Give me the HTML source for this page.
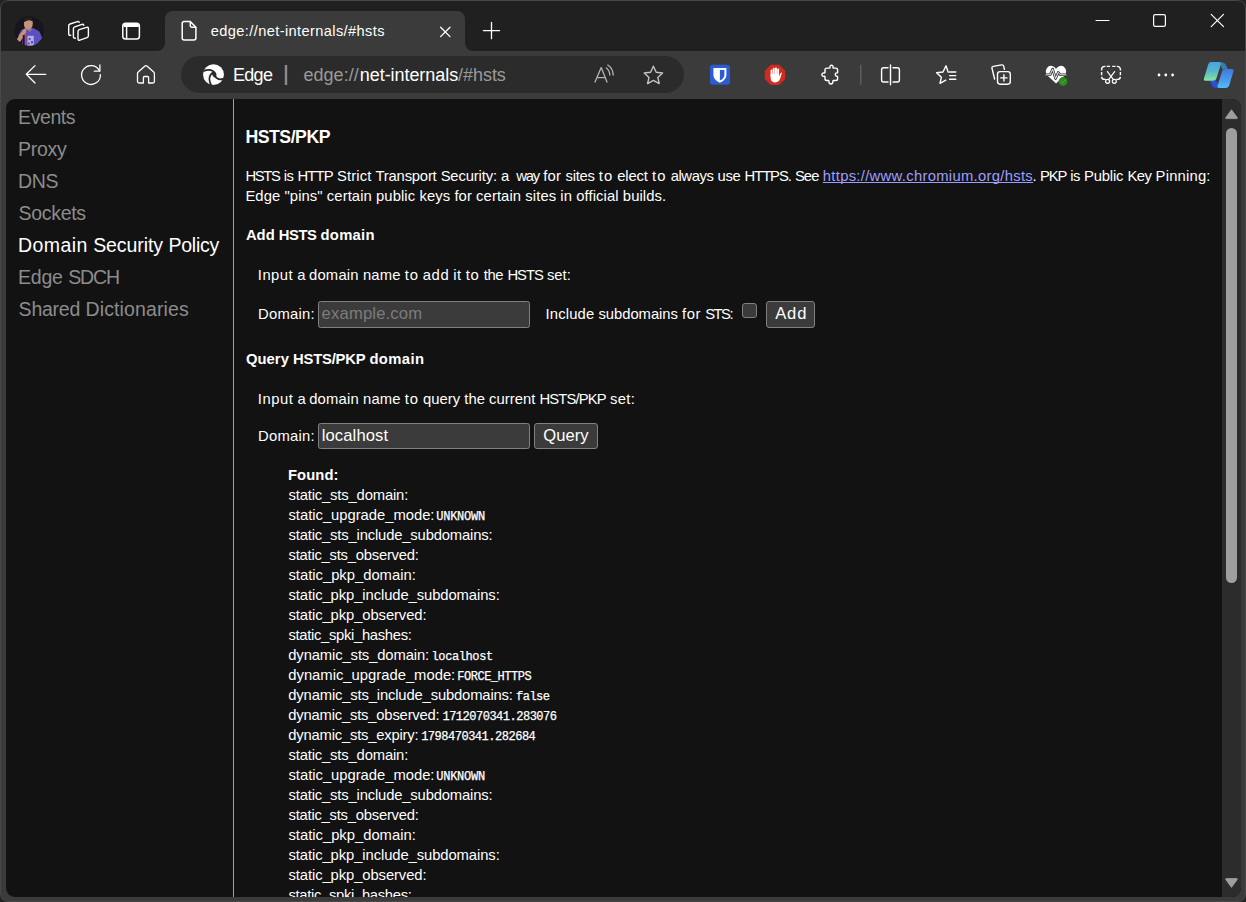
<!DOCTYPE html>
<html lang="en">
<head>
<meta charset="utf-8">
<title>edge://net-internals/#hsts</title>
<style>
*{box-sizing:border-box;margin:0;padding:0}
html,body{width:1246px;height:902px;overflow:hidden;background:#232323}
body{font-family:"Liberation Sans",sans-serif;color:#fff;position:relative}
#win{position:absolute;left:0;top:0;width:1246px;height:902px;background:#3b3b3b;overflow:hidden;border-radius:8px}
#frame{position:absolute;left:0;top:0;width:1246px;height:902px;border:1px solid #474747;border-radius:8px;pointer-events:none}
#titlebar{position:absolute;left:0;top:0;width:1246px;height:50.6px;background:#202020}
#tab{position:absolute;left:165px;top:11px;width:300px;height:39.6px;background:#3b3b3b;border-radius:8px 8px 0 0}
#tab:before,#tab:after{content:"";position:absolute;bottom:0;width:8px;height:8px}
#tab:before{left:-8px;background:radial-gradient(circle at 0 0,transparent 7.5px,#3b3b3b 8.5px)}
#tab:after{right:-8px;background:radial-gradient(circle at 100% 0,transparent 7.5px,#3b3b3b 8.5px)}
#omni{position:absolute;left:181.3px;top:56px;width:502.7px;height:37px;border-radius:18.5px;background:#2b2b2b}
#content{position:absolute;left:6px;top:99px;width:1234.5px;height:797.5px;background:#121212;border-radius:9px;overflow:hidden}
#divider{position:absolute;left:227px;top:0;width:1px;height:798px;background:#a0a0a0}
.t{position:absolute;white-space:nowrap;color:#fff;display:block}
.inp{position:absolute;left:312px;width:212px;height:27px;background:#3b3b3b;border:1px solid #808080;border-radius:2.5px}
.btn{position:absolute;height:27px;background:#3b3b3b;border:1px solid #808080;border-radius:3px}
#cb{position:absolute;left:736px;top:204px;width:15px;height:15px;background:#3b3b3b;border:1px solid #808080;border-radius:3px}
#sbtrack{position:absolute;left:1216px;top:0;width:19px;height:798px;background:#2c2c2c}
#sbthumb{position:absolute;left:1220px;top:29px;width:11px;height:455px;border-radius:5.5px;background:#9f9f9f}
#icons{position:absolute;left:0;top:0}
#sbicons{position:absolute;left:0;top:0}
</style>
</head>
<body>
<div id="win">
<div id="titlebar"></div>
<div id="tab"></div>
<div id="omni"></div>
<svg id="icons" width="1246" height="100" viewBox="0 0 1246 100" fill="none" stroke-linecap="round" stroke-linejoin="round">
<defs>
<clipPath id="avc"><circle cx="29.2" cy="31" r="14.8"/></clipPath>
<linearGradient id="cpl" x1="0" y1="0" x2="0" y2="1"><stop offset="0" stop-color="#46a4e2"/><stop offset="0.5" stop-color="#58b8c8"/><stop offset="1" stop-color="#86e4a0"/></linearGradient>
<linearGradient id="cpr" x1="0" y1="0" x2="0" y2="1"><stop offset="0" stop-color="#4677dc"/><stop offset="0.6" stop-color="#4a9cec"/><stop offset="1" stop-color="#52c0f4"/></linearGradient>
<filter id="avb" x="-10%" y="-10%" width="120%" height="120%"><feGaussianBlur stdDeviation="0.45"/></filter>
</defs>
<!-- avatar -->
<g clip-path="url(#avc)">
<rect x="13" y="15" width="33" height="33" fill="#17151d"/>
<g filter="url(#avb)">
<path d="M18.2 36 L21.4 29.8 L26 28.4 L33.6 28.2 L39.5 31.6 L42.2 38.2 L38.6 42.2 L37.6 47 L22 47 L22.6 36 Z" fill="#5b4fc0" stroke="none"/>
<path d="M16.8 39.6 L19.6 34.4 L24.2 28.6 L26.4 29.4 L26 32.6 L22.6 38 L20 42 Z" fill="#c69272" stroke="none"/>
<path d="M24 22 Q23.6 26.4 25.2 28.4 Q27.6 30.8 30.4 29.2 Q33 27 32.8 22 Q32 19.4 28.4 19.4 Q24.6 19.4 24 22 Z" fill="#be9583" stroke="none"/>
<path d="M23.6 22.6 Q23.4 17.6 28 17.6 Q32.2 17.6 32.4 21.6 Q30.4 20 28 20.4 Q25.4 20.6 23.6 22.6Z" fill="#2b1d1a" stroke="none"/>
<path d="M27.4 28.8 L29.6 32 L33 28.6 L30.6 29.6 Z" fill="#a97f6d" stroke="none"/>
<path d="M27.4 35.8 h6.4 v10.4 h-6.4z" fill="#b4ade6" stroke="none"/>
<path d="M28.6 38 h2 v2 h-2z M31 41 h2 v2.4 h-2z M28 42.4 h1.8 v2 h-1.8z" fill="#5b4fc0" stroke="none"/>
<path d="M24.6 33.6 h1.7 v13 h-1.7z" fill="#e03c24" stroke="none"/>
<path d="M22.8 35 h1.8 v12 h-1.8z" fill="#14183c" stroke="none"/>
</g>
</g>
<!-- workspaces -->
<g stroke="#fff" stroke-width="1.4">
<path d="M79.3 29.7 L86.6 27.3 Q88.4 26.8 88.4 28.6 L88.4 35.8 Q88.4 37.2 87 37.7 L79.8 40.1 Q78 40.7 78 38.9 L78 31.5 Q78 30.1 79.3 29.7 Z"/>
<path d="M75.4 38.2 Q73.4 38.6 73.4 36.6 L73.4 28.6 Q73.4 27.2 74.7 26.8 L82 24.4 Q83.4 24 83.8 25.2"/>
<path d="M70.7 35.3 Q68.7 35.7 68.7 33.7 L68.7 25.8 Q68.7 24.4 70 24 L77.4 21.6 Q78.8 21.2 79.2 22.4"/>
</g>
<!-- tab actions -->
<g stroke="#fff" stroke-width="1.5">
<rect x="122.8" y="23.2" width="16.6" height="15.9" rx="2.8"/>
<path d="M123.5 25.4 H138.8" stroke-width="3.4" stroke-linecap="butt"/>
<path d="M126.6 26 V38.6" stroke-width="1.5"/>
</g>
<!-- page icon -->
<g stroke="#fff" stroke-width="1.5">
<path d="M184.2 21.6 H190.3 L195.9 27.2 V38 a2 2 0 0 1 -2 2 H184.2 a2 2 0 0 1 -2 -2 V23.6 a2 2 0 0 1 2 -2 Z"/>
<path d="M190.3 21.8 V25.7 a1.5 1.5 0 0 0 1.5 1.5 H195.7"/>
</g>
<!-- tab close, new tab -->
<path d="M440.6 27.2 L450 36.6 M450 27.2 L440.6 36.6" stroke="#fff" stroke-width="1.3"/>
<path d="M483.4 30.6 H499.6 M491.5 22.5 V38.7" stroke="#fff" stroke-width="1.3"/>
<!-- window controls -->
<path d="M1096 20.5 H1109" stroke="#fff" stroke-width="1.2"/>
<rect x="1153.6" y="14.6" width="11.8" height="11.8" rx="1.6" stroke="#fff" stroke-width="1.2"/>
<path d="M1211.2 14.3 L1223.5 26.6 M1223.5 14.3 L1211.2 26.6" stroke="#fff" stroke-width="1.2"/>
<!-- back -->
<path d="M45.8 74.3 H26.8 M35 65.6 L26.3 74.3 L35 83" stroke="#fff" stroke-width="1.3"/>
<!-- refresh -->
<path d="M99.4 70.8 A9.4 9.4 0 1 0 100.4 74.6" stroke="#fff" stroke-width="1.3"/>
<path d="M94.3 71.2 H99.9 V65" stroke="#fff" stroke-width="1.3"/>
<!-- home -->
<path d="M143.4 83 H139 a1.5 1.5 0 0 1 -1.5 -1.5 V73.6 a2 2 0 0 1 0.7 -1.5 L145 66 a1.4 1.4 0 0 1 1.9 0 L153.7 72.1 a2 2 0 0 1 0.7 1.5 V81.5 a1.5 1.5 0 0 1 -1.5 1.5 H148.6 V77.5 a1 1 0 0 0 -1 -1 H144.4 a1 1 0 0 0 -1 1 Z" stroke="#fff" stroke-width="1.3"/>
<!-- edge logo -->
<circle cx="213.5" cy="74.7" r="10.4" fill="#fff" stroke="none"/>
<path d="M204 71 Q209 68.8 213.2 71.2 Q216.2 73.2 215.4 76.4 Q217.8 80.6 223 78.8" stroke="#2b2b2b" stroke-width="1.8"/>
<path d="M213.4 72 Q209.2 74.8 209.4 79.4 Q209.6 82.4 211.2 85.4" stroke="#2b2b2b" stroke-width="1.7"/>
<path d="M211.6 73.2 L213.6 71.2 Q216.2 73 215.7 76.2 L216.4 78.2 Q213 77.6 211.6 73.2 Z" fill="#2b2b2b" stroke="none"/>
<!-- omni separator -->
<path d="M286 65 V85" stroke="#8a8a8a" stroke-width="2.4" stroke-linecap="butt"/>
<!-- read aloud -->
<g stroke="#b4b4b4" stroke-width="1.3">
<path d="M595 82 L601.2 67.6 L607 82 M597 77.6 H605.2"/>
<path d="M606.4 68 Q609.6 70.4 609.8 75"/>
<path d="M607.8 65 Q613 68.6 613.2 75"/>
</g>
<!-- star -->
<path d="M653.4 66.2 L656.2 72.2 L662.6 73 L657.8 77.4 L659.2 83.6 L653.4 80.4 L647.6 83.6 L649 77.4 L644.2 73 L650.6 72.2 Z" stroke="#c4c4c4" stroke-width="1.4"/>
<!-- bitwarden -->
<rect x="709.9" y="64.8" width="20.1" height="19.9" rx="3" fill="#2a5cd6" stroke="none"/>
<path d="M713.4 68 H726.4 V75 Q726.4 80 719.9 82.7 Q713.4 80 713.4 75 Z" fill="#fff" stroke="none"/>
<path d="M719.9 70 H724.4 V75 Q724.4 78.4 719.9 80.6 Z" fill="#2a5cd6" stroke="none"/>
<!-- adblock -->
<path d="M770.8 64.7 H779.2 L785.2 70.7 V79.1 L779.2 85.1 H770.8 L764.8 79.1 V70.7 Z" fill="#d12a20" stroke="none"/>
<g fill="#fff" stroke="none">
<rect x="770.6" y="69.6" width="1.9" height="7" rx="0.9"/>
<rect x="772.8" y="67.8" width="1.9" height="8" rx="0.9"/>
<rect x="775" y="67.4" width="1.9" height="8" rx="0.9"/>
<rect x="777.2" y="68.6" width="1.9" height="8" rx="0.9"/>
<path d="M770.6 74 H779.1 V76.4 L780.6 73.2 Q781.4 72 782 72.8 L780.2 78.6 Q778.8 82.4 775.6 82.4 Q770.6 82.4 770.6 77.4 Z"/>
</g>
<!-- puzzle -->
<path d="M826.8 68.1 H829.6 Q830 68.1 829.95 67.3 A1.6 1.6 0 1 1 833.05 67.3 Q833 68.1 833.4 68.1 H835.8 a1.8 1.8 0 0 1 1.8 1.8 V72.4 Q837.6 72.9 836.9 72.9 A1.7 1.7 0 0 0 836.9 76.3 Q837.6 76.3 837.6 76.8 V78.7 a1.8 1.8 0 0 1 -1.8 1.8 H833.2 Q832.8 80.5 832.8 81.6 A1.95 1.95 0 1 1 829 81.6 Q829 80.5 828.6 80.5 H826.8 a1.8 1.8 0 0 1 -1.8 -1.8 V76.8 Q825 76.3 824 76.3 A1.7 1.7 0 1 1 824 73 Q825 73 825 72.5 V69.9 a1.8 1.8 0 0 1 1.8 -1.8 Z" stroke="#fff" stroke-width="1.4"/>
<!-- toolbar separator -->
<path d="M860.8 64.8 V84.8" stroke="#5c5c5c" stroke-width="1.6" stroke-linecap="butt"/>
<!-- split screen -->
<g stroke="#fff" stroke-width="1.4">
<path d="M888 67.7 H883.6 a2 2 0 0 0 -2 2 V80 a2 2 0 0 0 2 2 H888"/>
<path d="M893 67.7 H897.4 a2 2 0 0 1 2 2 V80 a2 2 0 0 1 -2 2 H893"/>
<path d="M890.5 65 V84.8"/>
</g>
<!-- favorites -->
<g stroke="#fff" stroke-width="1.4">
<path d="M948.2 72.2 L946 65.8 L943 72 L936.6 72.8 L941.4 77.2 L940 83.4 L945.8 80.2"/>
<path d="M949.6 72 H955.8 M949.6 75.6 H955.8 M949.6 79.2 H955.8"/>
</g>
<!-- collections -->
<g stroke="#fff" stroke-width="1.4">
<path d="M994.6 79 L992 68.4 Q991.6 66.8 993.2 66.4 L1001.6 64.9 Q1003.4 64.7 1003.8 66.4 L1004.4 69.4"/>
<rect x="997.5" y="71.6" width="12.8" height="12.6" rx="2.6"/>
<path d="M1000.8 77.9 H1007 M1003.9 74.8 V81"/>
</g>
<!-- heart -->
<path d="M1056 83.6 L1047.4 75.4 Q1044.4 71.6 1047 68 Q1049.6 64.6 1053.4 66.6 Q1055.2 67.6 1056 69 Q1056.8 67.6 1058.6 66.6 Q1062.4 64.6 1065 68 Q1067.6 71.6 1064.6 75.4 Z" fill="#fff" stroke="none"/>
<path d="M1045 74.8 H1050.2 L1052.6 69 L1055.6 78.6 L1058.2 72.4 L1060.2 74.8 H1067" stroke="#3b3b3b" stroke-width="2.6"/>
<path d="M1046 74.8 H1050.2 L1052.6 69 L1055.6 78.6 L1058.2 72.4 L1060.2 74.8 H1066" stroke="#fff" stroke-width="0.9"/>
<circle cx="1063" cy="81.5" r="4.4" fill="#2f8a1f" stroke="none"/>
<path d="M1061 81.7 L1062.5 83.1 L1065.2 80" stroke="#58a448" stroke-width="0.9"/>
<!-- screenshot -->
<g stroke="#fff" stroke-width="1.4">
<path stroke-linecap="butt" d="M1101.6 70.4 V69.6 a3.2 3.2 0 0 1 3.2 -3.2 H1105.4 M1106.7 66.4 H1110 M1112.2 66.4 H1115.5 M1116.8 66.4 H1117.2 a3.2 3.2 0 0 1 3.2 3.2 V70.4 M1120.4 72 V75.2 M1120.4 76.8 a3 3 0 0 1 -3 2.6 H1116.2 M1101.6 72 V75.2 M1101.6 76.8 a3 3 0 0 0 3 2.6 H1105.8"/>
<path d="M1107.4 71.6 L1113.4 79.6 M1114.6 71.6 L1108.6 79.6" stroke-width="1.2"/>
<circle cx="1107.6" cy="81.3" r="2" stroke-width="1.2"/>
<circle cx="1114.3" cy="81.3" r="2" stroke-width="1.2"/>
</g>
<!-- more -->
<g fill="#fff" stroke="none"><circle cx="1159" cy="75" r="1.4"/><circle cx="1165.8" cy="75" r="1.4"/><circle cx="1172.6" cy="75" r="1.4"/></g>
<!-- copilot -->
<path d="M1217 62 Q1224.4 61.4 1226 65 L1227.8 69.4 L1222.4 69.6 L1220 64 Z" fill="#2f7fb0" stroke="none"/>
<path d="M1209.6 80.4 L1212.4 86.2 Q1213.4 88 1216 88 L1220 88 L1218 84 L1216 80.4 Z" fill="#2b4fd6" stroke="none"/>
<path d="M1211.2 62 H1219 Q1221.6 62 1220.8 64.6 L1216.4 78.4 Q1215.6 80.8 1213.2 80.8 H1206 Q1203.2 80.8 1204 78.2 L1208.2 64.4 Q1209 62 1211.2 62 Z" fill="url(#cpl)" stroke="none"/>
<path d="M1225.6 69 H1231.4 Q1234.2 69 1233.4 71.6 L1229.2 85.6 Q1228.4 88 1226 88 H1219.4 Q1216.8 88 1217.6 85.6 L1222 71.4 Q1222.8 69 1225.6 69 Z" fill="url(#cpr)" stroke="none"/>
</svg>

<div class="t" style='left:210.78px;top:21.00px;font-size:14.6px;line-height:20px;letter-spacing:0.395px;'>edge://net-internals/#hsts</div>
<div class="t" style='left:233.02px;top:63.00px;font-size:18px;line-height:24px;letter-spacing:-0.721px;'>Edge</div>
<div class="t" style='left:303.54px;top:63.00px;font-size:18px;line-height:24px;letter-spacing:0.020px;color:#9a9a9a;'>edge://</div>
<div class="t" style='left:359.80px;top:63.00px;font-size:18px;line-height:24px;letter-spacing:-0.059px;'>net-internals</div>
<div class="t" style='left:458.00px;top:63.00px;font-size:18px;line-height:24px;letter-spacing:-0.035px;color:#9a9a9a;'>/#hsts</div>
<div id="content">
<div id="divider"></div>
<div id="sbtrack"></div>
<div id="sbthumb"></div>
<svg id="sbicons" width="1235" height="798" viewBox="6 99 1235 798">
<path d="M1231.5 109.8 L1237.2 117.6 Q1237.8 118.6 1236.6 118.6 L1226.4 118.6 Q1225.2 118.6 1225.8 117.6 Z" fill="#9f9f9f" stroke="#9f9f9f" stroke-width="0.8" stroke-linejoin="round"/>
<path d="M1231.5 887.4 L1237.2 879.6 Q1237.8 878.6 1236.6 878.6 L1226.4 878.6 Q1225.2 878.6 1225.8 879.6 Z" fill="#9f9f9f" stroke="#9f9f9f" stroke-width="0.8" stroke-linejoin="round"/>
</svg>
<div class="inp" style="top:202px"></div>
<div id="cb"></div>
<div class="btn" style="left:760px;top:202px;width:49px"></div>
<div class="inp" style="top:324px;height:26px"></div>
<div class="btn" style="left:528px;top:324px;width:64px;height:26px"></div>
<div class="t" style='left:12.10px;top:5.00px;font-size:19.5px;line-height:26px;letter-spacing:-0.422px;color:#8c8c8c;'>Events</div>
<div class="t" style='left:12.10px;top:37.00px;font-size:19.5px;line-height:26px;letter-spacing:-0.302px;color:#8c8c8c;'>Proxy</div>
<div class="t" style='left:12.10px;top:69.00px;font-size:19.5px;line-height:26px;letter-spacing:-0.438px;color:#8c8c8c;'>DNS</div>
<div class="t" style='left:12.61px;top:101.00px;font-size:19.5px;line-height:26px;letter-spacing:-0.329px;color:#8c8c8c;'>Sockets</div>
<div class="t" style='left:12.10px;top:133.00px;font-size:19.5px;line-height:26px;'><span style="letter-spacing:0.401px">Domain</span> <span style="letter-spacing:-0.071px">Security</span> <span style="letter-spacing:-0.236px">Policy</span></div>
<div class="t" style='left:12.10px;top:165.00px;font-size:19.5px;line-height:26px;color:#8c8c8c;'><span style="letter-spacing:-0.236px">Edge</span> <span style="letter-spacing:-1.126px">SDCH</span></div>
<div class="t" style='left:12.61px;top:197.00px;font-size:19.5px;line-height:26px;color:#8c8c8c;'><span style="letter-spacing:-0.235px">Shared</span> <span style="letter-spacing:0.121px">Dictionaries</span></div>
<div class="t" style='left:239.42px;top:26.00px;font-size:17.7px;line-height:24px;letter-spacing:-0.481px;font-weight:bold;'>HSTS/PKP</div>
<div class="t" style='left:239.39px;top:67.00px;font-size:14.8px;line-height:20px;'><span style="letter-spacing:-1.313px">HSTS</span> <span style="letter-spacing:-0.560px">is</span> <span style="letter-spacing:-0.775px">HTTP</span> <span style="letter-spacing:0.104px">Strict</span> <span style="letter-spacing:-0.202px">Transport</span> <span style="letter-spacing:-0.137px">Security:</span> <span style="letter-spacing:2.710px">a</span> <span style="letter-spacing:-1.152px">way</span> <span style="letter-spacing:0.306px">for</span> <span style="letter-spacing:-0.250px">sites</span> <span style="letter-spacing:0.972px">to</span> <span style="letter-spacing:-0.132px">elect</span> <span style="letter-spacing:1.122px">to</span> <span style="letter-spacing:-0.412px">always</span> <span style="letter-spacing:-0.340px">use</span> <span style="letter-spacing:-1.064px">HTTPS.</span> <span style="letter-spacing:-0.899px">See</span></div>
<span class="t" style='left:816.77px;top:67.00px;font-size:14.8px;line-height:20px;letter-spacing:0.304px;color:#9e9eff;text-decoration:underline;text-underline-offset:1px;text-decoration-thickness:1px;text-decoration-skip-ink:none;'>https://www.chromium.org/hsts</span>
<div class="t" style='left:1026.55px;top:67.00px;font-size:14.8px;line-height:20px;'><span style="letter-spacing:-0.885px">.</span> <span style="letter-spacing:-1.132px">PKP</span> <span style="letter-spacing:-0.510px">is</span> <span style="letter-spacing:-0.185px">Public</span> <span style="letter-spacing:-0.469px">Key</span> <span style="letter-spacing:0.199px">Pinning:</span></div>
<div class="t" style='left:239.39px;top:87.00px;font-size:14.8px;line-height:20px;letter-spacing:0.086px;'>Edge "pins" certain public keys for certain sites in official builds.</div>
<div class="t" style='left:239.93px;top:126.00px;font-size:14.8px;line-height:20px;font-weight:bold;'><span style="letter-spacing:0.002px">Add</span> <span style="letter-spacing:-0.473px">HSTS</span> <span style="letter-spacing:0.282px">domain</span></div>
<div class="t" style='left:251.83px;top:166.00px;font-size:14.8px;line-height:20px;'><span style="letter-spacing:0.463px">Input</span> <span style="letter-spacing:-0.533px">a</span> <span style="letter-spacing:0.200px">domain</span> <span style="letter-spacing:0.208px">name</span> <span style="letter-spacing:0.722px">to</span> <span style="letter-spacing:0.580px">add</span> <span style="letter-spacing:0.378px">it</span> <span style="letter-spacing:0.774px">to</span> <span style="letter-spacing:-0.324px">the</span> <span style="letter-spacing:-0.993px">HSTS</span> <span style="letter-spacing:-0.029px">set:</span></div>
<div class="t" style='left:251.99px;top:205.00px;font-size:14.8px;line-height:20px;letter-spacing:0.261px;'>Domain:</div>
<div class="t" style='left:539.53px;top:205.00px;font-size:14.8px;line-height:20px;'><span style="letter-spacing:0.161px">Include</span> <span style="letter-spacing:-0.039px">subdomains</span> <span style="letter-spacing:0.586px">for</span> <span style="letter-spacing:-1.488px">STS:</span></div>
<div class="t" style='left:239.89px;top:250.00px;font-size:14.8px;line-height:20px;font-weight:bold;'><span style="letter-spacing:0.068px">Query</span> <span style="letter-spacing:-0.228px">HSTS/PKP</span> <span style="letter-spacing:0.382px">domain</span></div>
<div class="t" style='left:251.83px;top:290.00px;font-size:14.8px;line-height:20px;'><span style="letter-spacing:0.543px">Input</span> <span style="letter-spacing:-0.833px">a</span> <span style="letter-spacing:0.216px">domain</span> <span style="letter-spacing:0.158px">name</span> <span style="letter-spacing:0.776px">to</span> <span style="letter-spacing:0.055px">query</span> <span style="letter-spacing:0.005px">the</span> <span style="letter-spacing:0.036px">current</span> <span style="letter-spacing:-0.849px">HSTS/PKP</span> <span style="letter-spacing:0.371px">set:</span></div>
<div class="t" style='left:251.99px;top:327.00px;font-size:14.8px;line-height:20px;letter-spacing:0.261px;'>Domain:</div>
<div class="t" style='left:281.91px;top:366.00px;font-size:14.8px;line-height:20px;letter-spacing:0.099px;font-weight:bold;'>Found:</div>
<div class="t" style='left:282.49px;top:386.00px;font-size:14.8px;line-height:20px;letter-spacing:-0.164px;'>static_sts_domain:</div>
<div class="t" style='left:282.49px;top:406.00px;font-size:14.8px;line-height:20px;letter-spacing:-0.024px;'>static_upgrade_mode:</div>
<div class="t" style='left:430.27px;top:410.00px;font-size:12px;line-height:16px;letter-spacing:-0.254px;font-family:"Liberation Mono", monospace;-webkit-text-stroke:0.25px #fff;'>UNKNOWN</div>
<div class="t" style='left:282.49px;top:426.00px;font-size:14.8px;line-height:20px;letter-spacing:-0.167px;'>static_sts_include_subdomains:</div>
<div class="t" style='left:282.49px;top:446.00px;font-size:14.8px;line-height:20px;letter-spacing:-0.238px;'>static_sts_observed:</div>
<div class="t" style='left:282.49px;top:466.00px;font-size:14.8px;line-height:20px;letter-spacing:-0.014px;'>static_pkp_domain:</div>
<div class="t" style='left:282.49px;top:486.00px;font-size:14.8px;line-height:20px;letter-spacing:-0.090px;'>static_pkp_include_subdomains:</div>
<div class="t" style='left:282.49px;top:506.00px;font-size:14.8px;line-height:20px;letter-spacing:-0.093px;'>static_pkp_observed:</div>
<div class="t" style='left:282.49px;top:526.00px;font-size:14.8px;line-height:20px;letter-spacing:-0.321px;'>static_spki_hashes:</div>
<div class="t" style='left:282.28px;top:546.00px;font-size:14.8px;line-height:20px;letter-spacing:-0.124px;'>dynamic_sts_domain:</div>
<div class="t" style='left:425.54px;top:550.00px;font-size:12px;line-height:16px;letter-spacing:-0.400px;font-family:"Liberation Mono", monospace;-webkit-text-stroke:0.25px #fff;'>localhost</div>
<div class="t" style='left:282.28px;top:566.00px;font-size:14.8px;line-height:20px;letter-spacing:-0.001px;'>dynamic_upgrade_mode:</div>
<div class="t" style='left:451.26px;top:570.00px;font-size:12px;line-height:16px;letter-spacing:-0.478px;font-family:"Liberation Mono", monospace;-webkit-text-stroke:0.25px #fff;'>FORCE_HTTPS</div>
<div class="t" style='left:282.28px;top:586.00px;font-size:14.8px;line-height:20px;letter-spacing:-0.160px;'>dynamic_sts_include_subdomains:</div>
<div class="t" style='left:510.09px;top:590.00px;font-size:12px;line-height:16px;letter-spacing:-0.527px;font-family:"Liberation Mono", monospace;-webkit-text-stroke:0.25px #fff;'>false</div>
<div class="t" style='left:282.28px;top:606.00px;font-size:14.8px;line-height:20px;letter-spacing:-0.199px;'>dynamic_sts_observed:</div>
<div class="t" style='left:436.43px;top:610.00px;font-size:12px;line-height:16px;letter-spacing:-0.492px;font-family:"Liberation Mono", monospace;-webkit-text-stroke:0.25px #fff;'>1712070341.283076</div>
<div class="t" style='left:282.28px;top:626.00px;font-size:14.8px;line-height:20px;letter-spacing:-0.204px;'>dynamic_sts_expiry:</div>
<div class="t" style='left:415.13px;top:630.00px;font-size:12px;line-height:16px;letter-spacing:-0.484px;font-family:"Liberation Mono", monospace;-webkit-text-stroke:0.25px #fff;'>1798470341.282684</div>
<div class="t" style='left:282.49px;top:646.00px;font-size:14.8px;line-height:20px;letter-spacing:-0.164px;'>static_sts_domain:</div>
<div class="t" style='left:282.49px;top:666.00px;font-size:14.8px;line-height:20px;letter-spacing:-0.024px;'>static_upgrade_mode:</div>
<div class="t" style='left:430.27px;top:670.00px;font-size:12px;line-height:16px;letter-spacing:-0.254px;font-family:"Liberation Mono", monospace;-webkit-text-stroke:0.25px #fff;'>UNKNOWN</div>
<div class="t" style='left:282.49px;top:686.00px;font-size:14.8px;line-height:20px;letter-spacing:-0.167px;'>static_sts_include_subdomains:</div>
<div class="t" style='left:282.49px;top:706.00px;font-size:14.8px;line-height:20px;letter-spacing:-0.238px;'>static_sts_observed:</div>
<div class="t" style='left:282.49px;top:726.00px;font-size:14.8px;line-height:20px;letter-spacing:-0.014px;'>static_pkp_domain:</div>
<div class="t" style='left:282.49px;top:746.00px;font-size:14.8px;line-height:20px;letter-spacing:-0.090px;'>static_pkp_include_subdomains:</div>
<div class="t" style='left:282.49px;top:766.00px;font-size:14.8px;line-height:20px;letter-spacing:-0.093px;'>static_pkp_observed:</div>
<div class="t" style='left:282.49px;top:786.00px;font-size:14.8px;line-height:20px;letter-spacing:-0.321px;'>static_spki_hashes:</div>
<div class="t" style='left:315.59px;top:204.00px;font-size:16.6px;line-height:22px;letter-spacing:0.182px;color:#7b7b7b;'>example.com</div>
<div class="t" style='left:315.68px;top:326.00px;font-size:16.6px;line-height:22px;letter-spacing:0.119px;'>localhost</div>
<div class="t" style='left:769.17px;top:204.00px;font-size:16.6px;line-height:22px;letter-spacing:0.889px;'>Add</div>
<div class="t" style='left:537.21px;top:326.00px;font-size:16.6px;line-height:22px;letter-spacing:0.033px;'>Query</div>
</div>
<div id="frame"></div>
</div>
</body>
</html>
